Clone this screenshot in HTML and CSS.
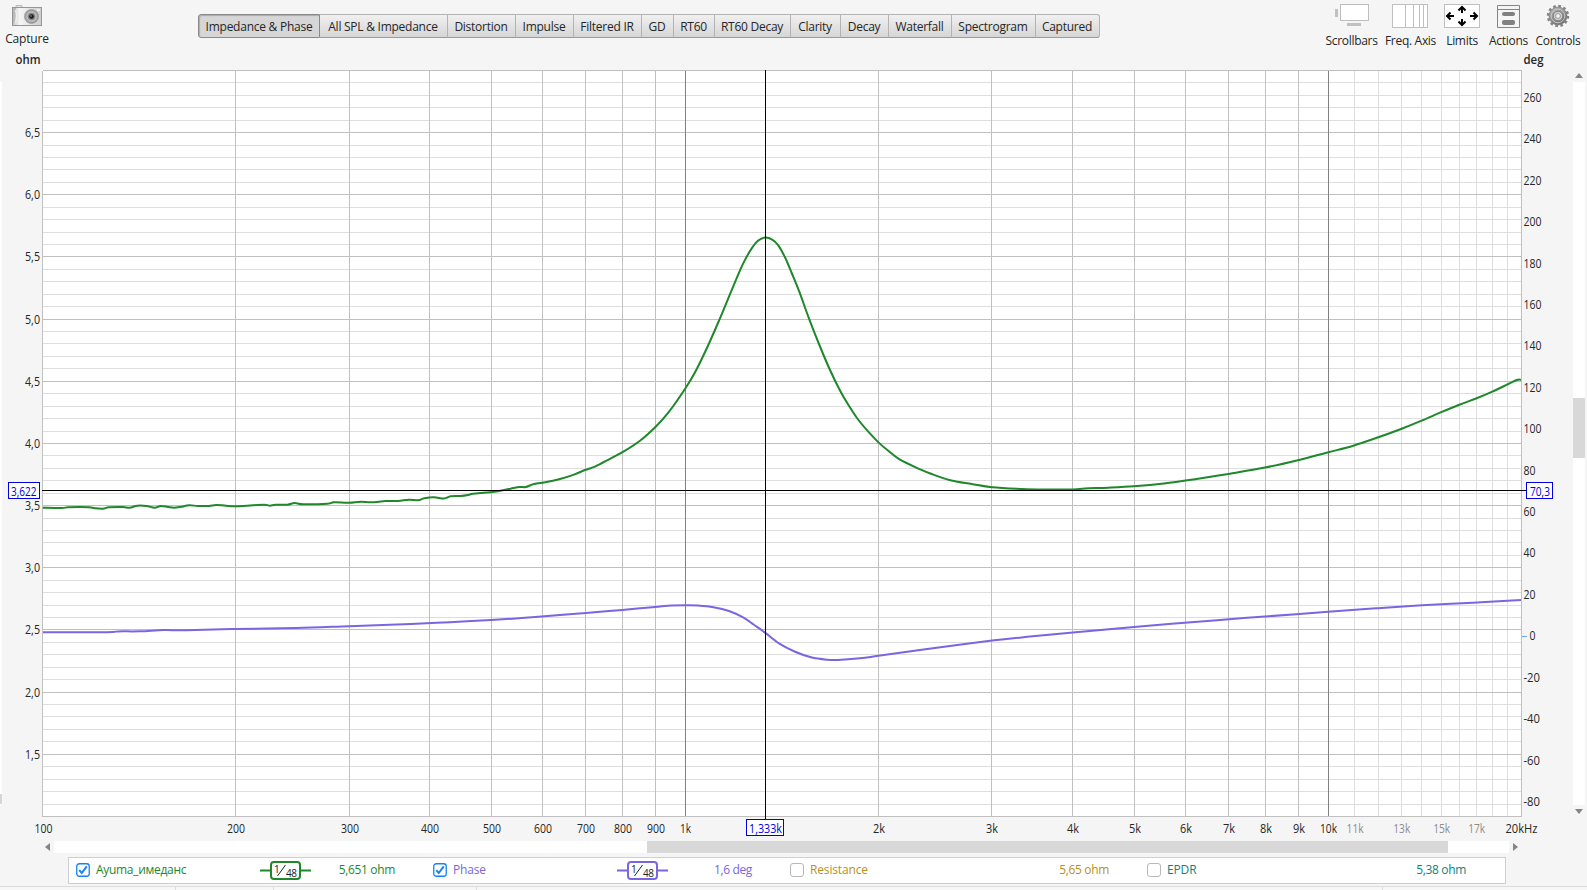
FILE: index.html
```html
<!DOCTYPE html>
<html lang="en">
<head>
<meta charset="utf-8">
<title>Impedance &amp; Phase</title>
<link rel="stylesheet" href="styles.css">
</head>
<body>
<div class="app">
  <header class="header">
    <button class="tool tool-capture">
      <svg width="32" height="24" viewBox="0 0 32 24">
        <defs>
          <linearGradient id="cam" x1="0" x2="1"><stop offset="0" stop-color="#c5c5c5"/><stop offset=".25" stop-color="#f6f6f6"/><stop offset="1" stop-color="#cecece"/></linearGradient>
          <radialGradient id="lens"><stop offset="0" stop-color="#777"/><stop offset=".6" stop-color="#c4c4c4"/><stop offset="1" stop-color="#8c8c8c"/></radialGradient>
        </defs>
        <path d="M5 3V1.5h6V3" fill="#e4e4e4" stroke="#bbb"/>
        <rect x="1.500" y="3.500" width="29" height="18" fill="url(#cam)" stroke="#959595"/>
        <path d="M2 4h3v8q0 5-3 9z" fill="#b9b9b9"/><path d="M4.500 6q2 6 0 13" fill="none" stroke="#eee" stroke-width="1.500"/>
        <rect x="26" y="5" width="3" height="2" fill="#eee"/>
        <circle cx="20.500" cy="12.500" r="7" fill="url(#lens)" stroke="#999" stroke-width=".7"/>
        <circle cx="20.500" cy="12.500" r="3.800" fill="#858585"/><circle cx="20.500" cy="12.500" r="2.300" fill="#151822"/><circle cx="20" cy="12" r=".8" fill="#8ba0d0"/>
      </svg>
      <span>Capture</span>
    </button>
    <nav class="tabs">
      <button class="tab is-active">Impedance &amp; Phase</button>
      <button class="tab">All SPL &amp; Impedance</button>
      <button class="tab">Distortion</button>
      <button class="tab">Impulse</button>
      <button class="tab">Filtered IR</button>
      <button class="tab">GD</button>
      <button class="tab">RT60</button>
      <button class="tab">RT60 Decay</button>
      <button class="tab">Clarity</button>
      <button class="tab">Decay</button>
      <button class="tab">Waterfall</button>
      <button class="tab">Spectrogram</button>
      <button class="tab">Captured</button>
    </nav>
    <div class="tools">
      <button class="tool">
        <svg width="61" height="24" viewBox="0 0 61 24"><rect x="19.500" y=".5" width="28" height="16" fill="#fff" stroke="#bdbdbd"/><path d="M14 5h3v8h-3zM26 19h14v3H26z" fill="#c0c0c0"/></svg>
        <span>Scrollbars</span>
      </button>
      <button class="tool">
        <svg width="57" height="24" viewBox="0 0 57 24"><rect x="10.500" y=".5" width="35" height="23" fill="#fff" stroke="#c0c0c0"/><path d="M23.500 0v24M31.500 0v24M37.500 0v24M41.500 0v24" stroke="#c0c0c0"/></svg>
        <span>Freq. Axis</span>
      </button>
      <button class="tool">
        <svg width="46" height="24" viewBox="0 0 46 24"><rect x="5.500" y=".5" width="35" height="23" fill="#fff" stroke="#c0c0c0"/><g fill="none" stroke="#000" stroke-width="2"><path d="M23 9V3M19.500 6.500 23 3l3.500 3.500M23 15v6M19.500 17.500 23 21l3.500-3.500M15 12H8M11.500 8.500 8 12l3.500 3.500M31 12h7M34.500 8.500 38 12l-3.500 3.500"/></g></svg>
        <span>Limits</span>
      </button>
      <button class="tool">
        <svg width="47" height="24" viewBox="0 0 47 24"><path d="M12.500 1.500h22v22h-22zM12.500 5.500h22" fill="none" stroke="#858585"/><rect x="17" y="8" width="13" height="4" rx="2" fill="#808080"/><rect x="17" y="16" width="13" height="5" rx="2" fill="#808080"/></svg>
        <span>Actions</span>
      </button>
      <button class="tool">
        <svg width="52" height="24" viewBox="0 0 52 24">
          <defs><linearGradient id="gear" x1="0" y1="0" x2=".6" y2="1"><stop offset="0" stop-color="#bdbdbd"/><stop offset="1" stop-color="#707070"/></linearGradient></defs>
          <circle cx="26" cy="12" r="10" fill="none" stroke="#858585" stroke-width="2.400" stroke-dasharray="2.700 2.536"/>
          <circle cx="26" cy="12" r="9" fill="url(#gear)" stroke="#777" stroke-width=".7"/>
          <circle cx="26" cy="12" r="6.800" fill="none" stroke="#c6c6c6"/>
          <circle cx="26" cy="12" r="4.800" fill="#ccc" stroke="#808080"/>
          <circle cx="26" cy="12" r="2.400" fill="#f5f5f5" stroke="#888" stroke-width=".8"/>
        </svg>
        <span>Controls</span>
      </button>
    </div>
  </header>

  <main class="main">
    <div class="edge-strip"><i></i></div>
    <svg class="chart" id="chart" width="1571" height="791" viewBox="2 50 1571 791">
      <rect x="42" y="70" width="1480" height="747" fill="#fff"/>
      <g id="grid" shape-rendering="crispEdges"></g>
      <path class="curve impedance" data-points="42.8,507.7 61.4,508 68,507.3 79.3,507 89.3,507.3 95,508.3 103,508.7 109,507.3 123,507 129.6,507.7 137.5,505.7 146.4,506 154.6,507.7 160.7,506 168,507 174,507.7 181,506.8 189,505.3 198,506 209,506 216,505 226,505.7 237.5,506.3 246,505.7 264,504.7 270,505.7 275.7,504.7 287.5,504.7 294.6,503 303.6,504.3 327.5,503.7 334,502.3 349,502.7 360.7,501.7 371.4,502.3 385.7,501 398,500.9 409,499.7 418,500.3 424.3,498.3 434,497.3 444,498.5 450.7,496.3 460.7,496 468,495 473,493.7 486,492.5 498,491.3 510.7,488.7 519.6,487 525.7,487 534,484 546.4,482 560,479 574,474.6 585,470 595,466.6 610,458.8 622.5,452.2 640,440.7 655.7,426.7 668.3,412.7 685.3,388.5 696,370.5 708.3,345 720,318.3 728.3,298.3 740,270.3 746,258 751.7,248.3 758.3,240.5 765.3,237.6 772.5,239.8 778.3,245.3 785,257.3 791.7,273 799.3,291.7 809.3,319.3 820,346.5 830,370 840,390.5 848.3,404.8 857.7,419 868.3,431.7 878.7,442.6 888.3,450.8 900,459.7 920,469.3 931,473.8 951.4,480.5 971.6,484 992,487.3 1022,489 1045,489.5 1073,489.5 1085,488.5 1108,487.7 1134,486.3 1164,483.5 1195,479.2 1230,473.7 1265,467.6 1300,459.7 1328.3,452.3 1353.3,445.7 1378.3,437.3 1401.7,428.7 1421.7,420.7 1440,412.7 1459.3,404.7 1476.7,398.3 1492.3,391.7 1508.3,384 1516.7,380 1521,379.7"/>
      <path class="curve phase" data-points="43,632.3 107,632.2 118,631.4 140,631.3 164,630.1 186,630.3 235,629 296,628 349,626.2 411,624 450,622.2 491,620 525,617.8 560,615 586,613 622.5,609.9 658,606.7 672,605.6 686,605.2 698,605.5 713.5,607.2 729,611 744,617.8 754,624.8 765,632.6 779,643.4 794.5,651.5 811,657.3 827,659.7 838,659.9 860,658.2 878.5,655.8 931,648.5 992,640.6 1030,636.5 1073,632.4 1134,627 1214,620.4 1265,616.5 1328,611.8 1378,608.2 1422,605.3 1473,602.7 1521,600"/>
      <g id="labels"></g>
      <path class="cursor" d="M42 490.500h1485M765.500 70v749" shape-rendering="crispEdges"/>
      <path d="M1522 636.500h5" stroke="#6fa8ee"/>
      <g class="readout">
        <rect x="8.500" y="482.500" width="31" height="16"/><text x="11" y="495.500" textLength="25.500" lengthAdjust="spacingAndGlyphs">3,622</text>
        <rect x="1526.500" y="482.500" width="26" height="16"/><text x="1530" y="495.500" textLength="20" lengthAdjust="spacingAndGlyphs">70,3</text>
        <rect x="746.500" y="819.500" width="37" height="16"/><text x="749" y="833" textLength="33" lengthAdjust="spacingAndGlyphs">1,333k</text>
      </g>
    </svg>
    <div class="vscroll">
      <b class="arrow arrow-up"></b>
      <div class="vtrack"><i></i></div>
      <b class="arrow arrow-down"></b>
    </div>
  </main>

  <div class="hscroll">
    <b class="arrow arrow-left"></b>
    <div class="htrack"><i></i></div>
    <b class="arrow arrow-right"></b>
  </div>

  <section class="legend">
    <div class="trace trace-impedance">
      <svg class="check" width="14" height="14" viewBox="0 0 14 14"><rect x=".75" y=".75" width="12.500" height="12.500" rx="2.500" fill="#fff" stroke="#1583f2" stroke-width="1.300"/><path d="M3.200 7.200 5.700 10 10.800 3.300" fill="none" stroke="#1583f2" stroke-width="2"/></svg>
      <span class="name">Ayuma_имеданс</span>
      <svg class="smooth" width="51" height="19" viewBox="0 0 51 19"><path d="M0 9.500h51" stroke="currentColor" stroke-width="2"/><rect x="11" y="1" width="29" height="17" rx="3" fill="#fff" stroke="currentColor" stroke-width="2"/><path d="M17.500 15 25.500 4" stroke="#222"/><text x="14" y="12">1</text><text x="26" y="15.500" textLength="11">48</text></svg>
      <span class="value">5,651 ohm</span>
    </div>
    <div class="trace trace-phase">
      <svg class="check" width="14" height="14" viewBox="0 0 14 14"><rect x=".75" y=".75" width="12.500" height="12.500" rx="2.500" fill="#fff" stroke="#1583f2" stroke-width="1.300"/><path d="M3.200 7.200 5.700 10 10.800 3.300" fill="none" stroke="#1583f2" stroke-width="2"/></svg>
      <span class="name">Phase</span>
      <svg class="smooth" width="51" height="19" viewBox="0 0 51 19"><path d="M0 9.500h51" stroke="currentColor" stroke-width="2"/><rect x="11" y="1" width="29" height="17" rx="3" fill="#fff" stroke="currentColor" stroke-width="2"/><path d="M17.500 15 25.500 4" stroke="#222"/><text x="14" y="12">1</text><text x="26" y="15.500" textLength="11">48</text></svg>
      <span class="value">1,6 deg</span>
    </div>
    <div class="trace trace-resistance">
      <svg class="check" width="14" height="14" viewBox="0 0 14 14"><rect x=".5" y=".5" width="13" height="13" rx="2.500" fill="#fff" stroke="#b8b8b8"/></svg>
      <span class="name">Resistance</span>
      <span class="value">5,65 ohm</span>
    </div>
    <div class="trace trace-epdr">
      <svg class="check" width="14" height="14" viewBox="0 0 14 14"><rect x=".5" y=".5" width="13" height="13" rx="2.500" fill="#fff" stroke="#b8b8b8"/></svg>
      <span class="name">EPDR</span>
      <span class="value">5,38 ohm</span>
    </div>
  </section>

  <footer class="status"><i></i><i></i><i></i><i></i><i></i></footer>
</div>
<script src="chart.js"></script>
</body>
</html>
```
FILE: styles.css
```css
* { box-sizing: border-box; }

body {
  margin: 0;
  background: #f5f5f5;
  color: #262626;
  font-family: "Open Sans", "Noto Sans", sans-serif;
  font-size: 12px;
  overflow: hidden;
}

.app { width: 1587px; height: 890px; display: flex; flex-direction: column; }

button {
  border: 0;
  padding: 0;
  background: none;
  font: inherit;
  color: inherit;
}

/* Header */
.header { height: 50px; flex: none; display: flex; align-items: flex-start; }

.tool { display: flex; flex-direction: column; align-items: center; line-height: 16px; white-space: nowrap; letter-spacing: -0.3px; }
.tool svg { display: block; flex: none; }
.tool span { margin-top: 5px; }
.tool-capture { width: 54px; padding-top: 4px; margin-right: 144px; }
.tool-capture span { margin-top: 3px; letter-spacing: -0.2px; }

.tabs {
  display: grid;
  grid-template-columns: 122px 128px 68px 58px 68px 32px 41px 76px 50px 48px 63px 84px 64px;
  height: 24px;
  margin-top: 14px;
  border-radius: 3px;
}
.tab {
  border: 1px solid #b3b3b3;
  border-left: 0;
  border-bottom-color: #999;
  background: linear-gradient(#f0f0f0, #d6d6d6);
  line-height: 22px;
  padding: 1px 1px 0 0;
  white-space: nowrap;
  letter-spacing: -0.25px;
  overflow: hidden;
}
.tab.is-active {
  border: 1px solid #8a8a8a;
  border-radius: 3px 0 0 3px;
  background: #d6d6d6;
  box-shadow: inset 1px 1px 1px #aaa;
  padding-right: 0;
}
.tab:last-child { border-radius: 0 3px 3px 0; }

.tools { display: grid; grid-template-columns: 61px 57px 46px 47px 52px; margin-left: 221px; padding-top: 4px; }

/* Chart area */
.main { height: 791px; flex: none; display: flex; }
.edge-strip { width: 2px; height: 723px; margin-top: 32px; padding-top: 712px; background: #fff; }
.edge-strip i { display: block; height: 10px; background: #d6d6d6; }
.chart { display: block; flex: none; }
.curve { fill: none; stroke-width: 2; stroke-linejoin: round; }
.impedance { stroke: #1e882b; }
.phase { stroke: #7a66e0; }
.cursor { fill: none; stroke: #000; }
.axis { font-size: 12px; fill: #262626; }
.axis.dim { fill: #8c8c8c; }
.axis.unit { font-weight: 600; }
.readout rect { fill: #fff; stroke: #0000e6; }
.readout text { fill: #0000e6; font-size: 12px; }

/* Scrollbars */
.vscroll { width: 12px; display: flex; flex-direction: column; align-items: center; padding-top: 23px; }
.vtrack { width: 12px; height: 723px; margin: 4px 0; padding-top: 316px; background: #fff; }
.vtrack i { display: block; height: 60px; background: #d8d8d8; }
.arrow { width: 0; height: 0; flex: none; border: 4px solid transparent; }
.arrow-up { border-top: 0; border-bottom: 5px solid #858585; }
.arrow-down { border-bottom: 0; border-top: 5px solid #858585; }
.arrow-left { border-left: 0; border-right: 5px solid #858585; }
.arrow-right { border-right: 0; border-left: 5px solid #858585; }
.hscroll { height: 12px; flex: none; display: flex; align-items: center; gap: 4px; padding-left: 45px; }
.htrack { width: 1455px; height: 12px; padding-left: 593px; background: #fff; }
.htrack i { display: block; width: 801px; height: 12px; background: #d8d8d8; }

/* Legend */
.legend {
  display: grid;
  grid-template-columns: repeat(4, 357px);
  align-items: center;
  width: 1438px;
  height: 27px;
  flex: none;
  margin: 4px 0 0 68px;
  padding-left: 7px;
  border: 1px solid #cfcfcf;
  background: #fff;
  overflow: hidden;
}
.trace { display: flex; align-items: center; width: 357px; height: 25px; }
.check { flex: none; margin-bottom: 2px; }
.name { width: 164px; margin-left: 6px; padding-bottom: 2px; white-space: nowrap; letter-spacing: -0.15px; }
.trace-impedance .name { letter-spacing: -0.3px; }
.smooth { flex: none; margin-bottom: 1px; }
.smooth text { font-size: 10px; fill: #222; }
.value { flex: 1; margin-right: 38px; padding-bottom: 2px; text-align: right; white-space: nowrap; letter-spacing: -0.35px; }
.trace-impedance { color: #1e882b; }
.trace-phase { color: #7a66e0; }
.trace-resistance { color: #b8901a; }
.trace-epdr { color: #0b8484; }

/* Status strip */
.status {
  display: grid;
  grid-template-columns: 176px 98px 203px 906px 1fr;
  height: 4px;
  margin-top: 2px;
  border-top: 1px solid #dcdcdc;
  background: #f7f7f7;
}
.status i { border-right: 1px solid #dcdcdc; }
.status i:last-child { border: 0; }
```
FILE: chart.js
```js
const NS = "http://www.w3.org/2000/svg";
const LEFT = 42, RIGHT = 1521, TOP = 70, BOTTOM = 816;
const grid = document.getElementById("grid");
const labels = document.getElementById("labels");

const xOf = f => LEFT + (RIGHT - LEFT) * Math.log(f / 100) / Math.log(200);
const yOf = ohm => TOP + (7 - ohm) * (BOTTOM - TOP) / 6 - 0.05;
const yOfDeg = deg => 636.3 - deg * 2.0705;

function line(x1, y1, x2, y2, color) {
  const el = document.createElementNS(NS, "line");
  const at = { x1: x1 + 0.5, y1: y1 + 0.5, x2: x2 + 0.5, y2: y2 + 0.5, stroke: color };
  for (const k in at) el.setAttribute(k, at[k]);
  grid.appendChild(el);
}

function label(text, x, y, anchor, width, extra) {
  const el = document.createElementNS(NS, "text");
  el.setAttribute("x", x);
  el.setAttribute("y", y);
  el.setAttribute("text-anchor", anchor);
  el.setAttribute("textLength", width);
  el.setAttribute("lengthAdjust", "spacingAndGlyphs");
  el.setAttribute("class", "axis " + (extra || ""));
  el.textContent = text;
  labels.appendChild(el);
}

/* Minor lines first so the major ones stay on top */
for (let i = 1; i < 60; i++) {
  if (i % 5) line(LEFT, Math.round(yOf(7 - i / 10)), RIGHT, Math.round(yOf(7 - i / 10)), "#dedede");
}
for (let k = 11; k < 20; k++) {
  const x = Math.round(xOf(k * 1000));
  line(x, TOP, x, BOTTOM, "#dedede");
}
for (let i = 5; i < 60; i += 5) {
  const y = Math.round(yOf(7 - i / 10));
  line(LEFT, y, RIGHT, y, "#c0c0c0");
  label((7 - i / 10).toFixed(1).replace(".", ","), 40, y + 5, "end", 15);
}
for (const decade of [100, 1000]) {
  for (let n = 2; n < 10; n++) {
    const x = Math.round(xOf(n * decade));
    line(x, TOP, x, BOTTOM, "#c0c0c0");
    label(decade === 100 ? String(n * 100) : n + "k", x + 1, 833, "middle", decade === 100 ? 18 : 12);
  }
}
for (const f of [1000, 10000]) {
  const x = Math.round(xOf(f));
  line(x, TOP, x, BOTTOM, "#808080");
}
line(LEFT, TOP, RIGHT, TOP, "#c0c0c0");
line(LEFT, BOTTOM, RIGHT, BOTTOM, "#c0c0c0");
line(LEFT, TOP, LEFT, BOTTOM, "#c0c0c0");
line(RIGHT, TOP, RIGHT, BOTTOM, "#c0c0c0");

label("100", 43.5, 833, "middle", 18);
label("1k", 685.5, 833, "middle", 11);
label("10k", 1328.5, 833, "middle", 17);
for (const k of [11, 13, 15, 17]) label(k + "k", xOf(k * 1000) + 1, 833, "middle", 17, "dim");
label("20kHz", 1505.5, 833, "start", 32);

for (let d = -80; d <= 260; d += 20) {
  const text = String(d);
  label(text, d === 0 ? 1529.5 : 1523.5, Math.floor(yOfDeg(d) + 4.5), "start", d < 0 ? 16.5 : d === 0 ? 6 : d < 100 ? 12 : 18);
}
label("ohm", 15.5, 64, "start", 25, "unit");
label("deg", 1523.5, 64, "start", 20, "unit");

/* Catmull-Rom spline through the measured points */
for (const curve of document.querySelectorAll(".curve")) {
  const p = curve.dataset.points.split(" ").map(s => s.split(",").map(Number));
  let d = "M" + p[0];
  for (let i = 0; i < p.length - 1; i++) {
    const a = p[Math.max(i - 1, 0)], b = p[i], c = p[i + 1], e = p[Math.min(i + 2, p.length - 1)];
    d += `C${b[0] + (c[0] - a[0]) / 6},${b[1] + (c[1] - a[1]) / 6} ${c[0] - (e[0] - b[0]) / 6},${c[1] - (e[1] - b[1]) / 6} ${c}`;
  }
  curve.setAttribute("d", d);
}
```
